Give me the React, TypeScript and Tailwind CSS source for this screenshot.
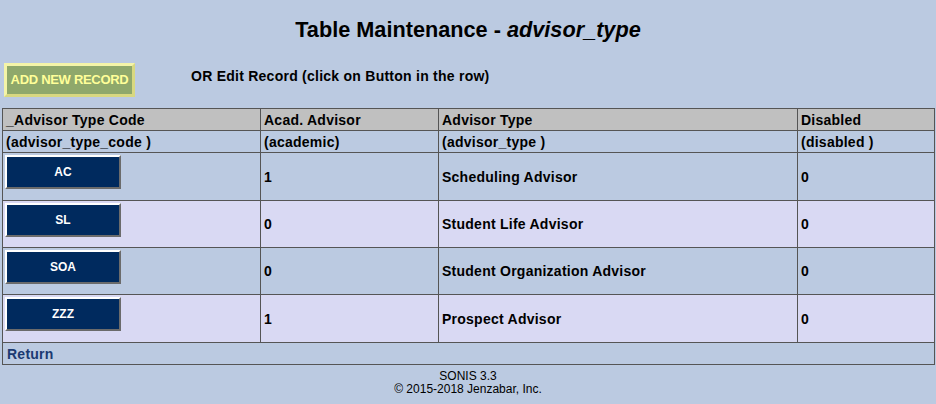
import React from 'react';

const rows = [
  { code: 'AC', academic: '1', type: 'Scheduling Advisor', disabled: '0', bg: 'bg-[#bbcae1]', pad: 'pb-[11px]' },
  { code: 'SL', academic: '0', type: 'Student Life Advisor', disabled: '0', bg: 'bg-[#d9d9f3]', pad: 'pb-[10px]' },
  { code: 'SOA', academic: '0', type: 'Student Organization Advisor', disabled: '0', bg: 'bg-[#bbcae1]', pad: 'pb-[10px]' },
  { code: 'ZZZ', academic: '1', type: 'Prospect Advisor', disabled: '0', bg: 'bg-[#d9d9f3]', pad: 'pb-[11px]' },
];

const cell = 'border border-[#555555] px-[3px] text-left align-middle';

export default function App() {
  return (
    <div
      className="min-h-[404px] bg-[#bbcae1] text-black"
      style={{ fontFamily: '"Liberation Sans", Arial, sans-serif' }}
    >
      <h1 className="pt-[17px] text-center text-[21.7px] font-bold leading-[26px]">
        Table Maintenance - <i>advisor_type</i>
      </h1>

      <div className="mt-[20px] flex items-start pl-[4px]">
        <button className="h-[34px] w-[131px] border-[3px] border-t-[#f4f4a8] border-l-[#f4f4a8] border-r-[#d8d880] border-b-[#d8d880] bg-[#8fa86b] text-[13px] font-bold tracking-[-0.3px] text-[#ffff99]">
          ADD NEW RECORD
        </button>
        <span className="ml-[56px] mt-[5px] text-[14px] font-bold leading-[16px] tracking-[0.25px]">
          OR Edit Record (click on Button in the row)
        </span>
      </div>

      <div className="mt-[11px] px-[2px]">
        <table className="w-[932px] table-fixed border-collapse text-[14px] font-bold leading-[16px] tracking-[0.25px]">
          <colgroup>
            <col className="w-[258px]" />
            <col className="w-[178px]" />
            <col className="w-[359px]" />
            <col className="w-[137px]" />
          </colgroup>
          <thead>
            <tr className="h-[22px] bg-[#c0c0c0]">
              <th className={cell}>_Advisor Type Code</th>
              <th className={cell}>Acad. Advisor</th>
              <th className={cell}>Advisor Type</th>
              <th className={cell}>Disabled</th>
            </tr>
            <tr className="h-[22px] bg-[#bbcae1]">
              <th className={cell}>(advisor_type_code )</th>
              <th className={cell}>(academic)</th>
              <th className={cell}>(advisor_type )</th>
              <th className={cell}>(disabled )</th>
            </tr>
          </thead>
          <tbody>
            {rows.map(r => (
              <tr key={r.code} className={r.bg}>
                <td className={`border border-[#555555] px-[2px] pt-[2px] align-top ${r.pad}`}>
                  <button className="block h-[34px] w-[116px] border-2 border-t-white border-l-white border-r-[#6b6b6b] border-b-[#6b6b6b] bg-[#002a5e] text-[12px] font-bold tracking-normal text-white">
                    {r.code}
                  </button>
                </td>
                <td className={cell}>{r.academic}</td>
                <td className={cell}>{r.type}</td>
                <td className={cell}>{r.disabled}</td>
              </tr>
            ))}
            <tr className="h-[22px] bg-[#bbcae1]">
              <td colSpan={4} className="border border-[#555555] px-[4px] text-[14px] text-[#1c3a72]">
                Return
              </td>
            </tr>
          </tbody>
        </table>
      </div>

      <div className="mt-[5px] text-center text-[12px] leading-[13px]">
        <div>SONIS 3.3</div>
        <div>© 2015-2018 Jenzabar, Inc.</div>
      </div>
    </div>
  );
}
